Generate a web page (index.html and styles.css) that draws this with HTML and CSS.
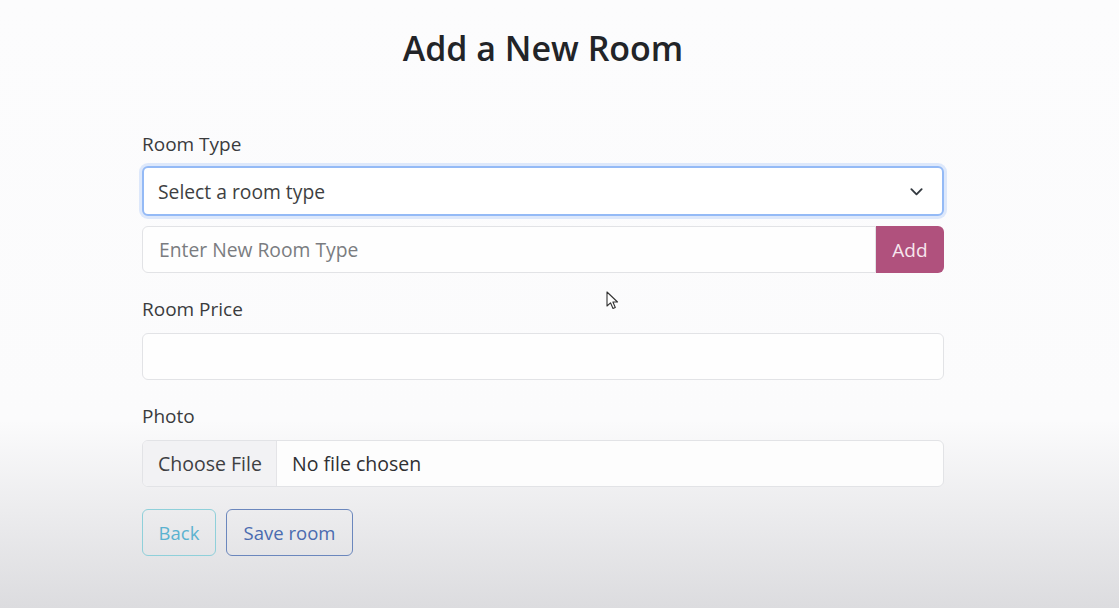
FILE: index.html
```html
<!DOCTYPE html>
<html lang="en">
<head>
<meta charset="utf-8">
<title>Add a New Room</title>
<link rel="stylesheet" href="styles.css">
</head>
<body>
<div class="page">
  <div class="container">
    <h2 class="title">Add a New Room</h2>
    <form class="form">
      <div class="field">
        <label class="label">Room Type</label>
        <div class="select">
          <span class="select-text">Select a room type</span>
          <svg class="chevron" width="16" height="16" viewBox="0 0 16 16"><path d="M2.5 5.5l5.5 5.5 5.5-5.5" fill="none" stroke="#343a40" stroke-width="2" stroke-linecap="round" stroke-linejoin="round"/></svg>
        </div>
        <div class="input-group">
          <div class="control grow placeholder">Enter New Room Type</div>
          <button type="button" class="btn-add">Add</button>
        </div>
      </div>
      <div class="field">
        <label class="label">Room Price</label>
        <div class="control"></div>
      </div>
      <div class="field">
        <label class="label">Photo</label>
        <div class="file">
          <span class="file-btn">Choose File</span>
          <span class="file-text">No file chosen</span>
        </div>
      </div>
      <div class="actions">
        <button type="button" class="btn btn-info">Back</button>
        <button type="button" class="btn btn-primary">Save room</button>
      </div>
    </form>
  </div>
  <svg class="cursor" width="14" height="20" viewBox="0 0 14 20"><path d="M1 1 L1 15 L4.5 11.8 L7 17.5 L9.3 16.5 L6.9 11 L11.5 11 Z" fill="#fff" stroke="#333" stroke-width="1.1" stroke-linejoin="round"/></svg>
</div>
</body>
</html>
```

FILE: styles.css
```css
* { box-sizing: border-box; }
html, body { margin: 0; padding: 0; }
body {
  font-family: "Open Sans", "Noto Sans", "Liberation Sans", sans-serif;
  color: #333;
  background: linear-gradient(to bottom, #fcfcfd 0, #fbfbfc 420px, #dcdcdf 608px);
  height: 608px;
  overflow: hidden;
}
.page {
  position: relative;
  height: 608px;
  padding-right: 33px;
}
.container {
  width: 802px;
  margin: 0 auto;
}
.title {
  margin: 0;
  padding-top: 24px;
  text-align: center;
  font-size: 34px;
  font-weight: 600;
  line-height: 48px;
  color: #222428;
  margin-bottom: 57px;
}
.form { display: flex; flex-direction: column; }
.field { display: flex; flex-direction: column; margin-bottom: 21px; }
.label {
  font-size: 19px;
  line-height: 30px;
  margin-bottom: 9px;
  color: #3a3b3d;
}
.field:first-child .label { margin-bottom: 7px; }
.select {
  display: flex;
  align-items: center;
  justify-content: space-between;
  height: 50px;
  padding: 0 18px 0 14px;
  border: 2px solid #94baf6;
  border-radius: 6px;
  background: #fff;
  box-shadow: 0 0 0 3px #dde8fb;
  font-size: 19.3px;
  color: #3e3f42;
  margin-bottom: 10px;
}
.chevron { width: 15px; height: 15px; }
.input-group { display: flex; height: 47px; }
.control {
  height: 47px;
  border: 1px solid #e2e3e6;
  border-radius: 6px;
  background: #fefefe;
  font-size: 19.3px;
  display: flex;
  align-items: center;
  padding: 0 16px;
}
.grow { flex: 1; border-top-right-radius: 0; border-bottom-right-radius: 0; }
.placeholder { color: #7a7c80; }
.btn-add {
  width: 68px;
  border: none;
  border-radius: 0 6px 6px 0;
  background: #b0517d;
  color: #f7e6ee;
  font-family: inherit;
  font-size: 19px;
  padding: 0;
}
.file {
  display: flex;
  height: 47px;
  border: 1px solid #e2e3e6;
  border-radius: 6px;
  background: #fdfdfd;
  overflow: hidden;
  font-size: 19.5px;
}
.file-btn {
  display: flex;
  align-items: center;
  flex: 0 0 134px;
  padding-left: 15px;
  white-space: nowrap;
  background: #f2f2f4;
  border-right: 1px solid #e4e4e7;
  color: #3e3f42;
}
.file-text {
  display: flex;
  align-items: center;
  padding-left: 15px;
  white-space: nowrap;
  color: #2f3033;
}
.actions { display: flex; gap: 10px; margin-top: 1px; }
.btn {
  height: 47px;
  padding: 0;
  border-radius: 6px;
  background: transparent;
  font-family: inherit;
  font-size: 18.5px;
}
.btn-info { border: 1.5px solid #8fd0da; color: #5ab2d0; width: 74px; }
.btn-primary { border: 1.5px solid #6b87bd; color: #4a6bb0; width: 127px; }
.cursor { position: absolute; left: 606px; top: 291px; }
```
